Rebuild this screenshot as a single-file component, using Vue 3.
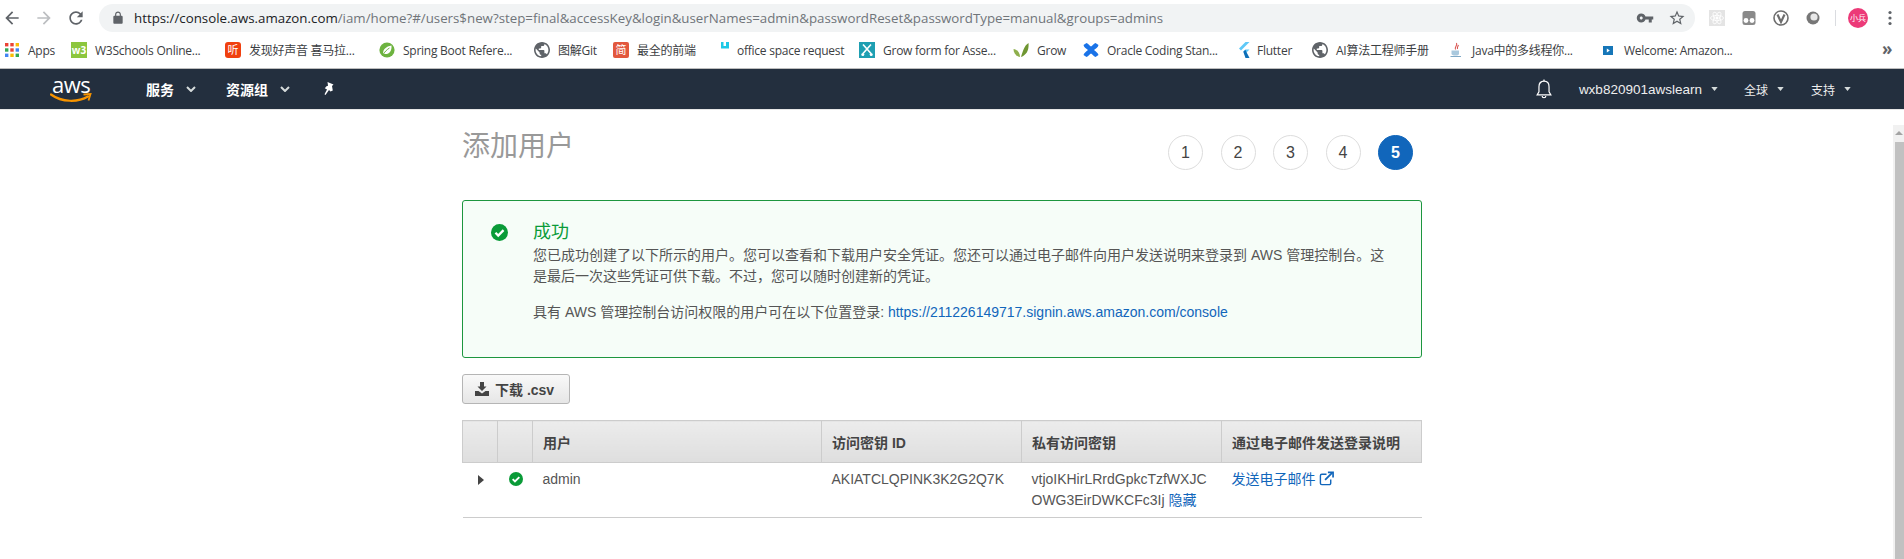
<template>
  <div class="page">
    <div class="toolbar">
      <svg class="tb-icon back" viewBox="0 0 24 24"><path d="M20 11H7.83l5.59-5.59L12 4l-8 8 8 8 1.41-1.41L7.83 13H20v-2z" /></svg>
      <svg class="tb-icon forward" viewBox="0 0 24 24"><path d="M12 4l-1.41 1.41L16.17 11H4v2h12.17l-5.58 5.59L12 20l8-8z" /></svg>
      <svg class="tb-icon reload" viewBox="0 0 24 24"><path d="M17.65 6.35C16.2 4.9 14.21 4 12 4c-4.42 0-7.99 3.58-7.99 8s3.57 8 7.99 8c3.73 0 6.84-2.55 7.73-6h-2.08c-.82 2.33-3.04 4-5.65 4-3.31 0-6-2.69-6-6s2.69-6 6-6c1.66 0 3.14.69 4.22 1.78L13 11h7V4l-2.35 2.35z" /></svg>
      <div class="omnibox">
        <svg class="lock" viewBox="0 0 24 24"><path d="M18 8h-1V6c0-2.76-2.24-5-5-5S7 3.24 7 6v2H6c-1.1 0-2 .9-2 2v10c0 1.1.9 2 2 2h12c1.1 0 2-.9 2-2V10c0-1.1-.9-2-2-2zM9 6c0-1.66 1.34-3 3-3s3 1.34 3 3v2H9V6z" /></svg>
        <span class="url"><span class="url-host">https://console.aws.amazon.com</span>/iam/home?#/users$new?step=final&amp;accessKey&amp;login&amp;userNames=admin&amp;passwordReset&amp;passwordType=manual&amp;groups=admins</span>
        <svg class="omni-icon key" viewBox="0 0 24 24"><path d="M12.65 10C11.83 7.67 9.61 6 7 6c-3.31 0-6 2.69-6 6s2.69 6 6 6c2.61 0 4.83-1.67 5.65-4H17v4h4v-4h2v-4H12.65zM7 14c-1.1 0-2-.9-2-2s.9-2 2-2 2 .9 2 2-.9 2-2 2z" /></svg>
        <svg class="omni-icon star" viewBox="0 0 24 24"><path d="M22 9.24l-7.19-.62L12 2 9.19 8.63 2 9.24l5.46 4.73L5.82 21 12 17.27 18.18 21l-1.63-7.03L22 9.24zM12 15.4l-3.76 2.27 1-4.28-3.32-2.88 4.38-.38L12 6.1l1.71 4.04 4.38.38-3.32 2.88 1 4.28L12 15.4z" /></svg>
      </div>
      <div class="extensions">
        <div class="ext ext-react">
          <svg viewBox="0 0 16 16" fill="none" stroke="#fff" stroke-width="0.8">
            <ellipse cx="8" cy="8" rx="6.5" ry="2.6" />
            <ellipse cx="8" cy="8" rx="6.5" ry="2.6" transform="rotate(60 8 8)" />
            <ellipse cx="8" cy="8" rx="6.5" ry="2.6" transform="rotate(120 8 8)" />
            <circle cx="8" cy="8" r="1.2" fill="#fff" />
          </svg>
        </div>
        <svg class="ext" viewBox="0 0 16 16">
          <rect x="1.5" y="1" width="13" height="14" rx="2.5" fill="#8a8a8a" />
          <circle cx="5" cy="10.5" r="2.4" fill="#fff" />
          <circle cx="11" cy="10.5" r="2.4" fill="#fff" />
        </svg>
        <svg class="ext" viewBox="0 0 16 16">
          <circle cx="8" cy="8" r="7" fill="#fff" stroke="#6e6e6e" stroke-width="1.6" />
          <path d="M4.5 4.5L8 12l3.5-7.5" fill="none" stroke="#6e6e6e" stroke-width="2.2" />
        </svg>
        <svg class="ext" viewBox="0 0 16 16">
          <circle cx="8" cy="8" r="6.5" fill="#777" />
          <circle cx="9" cy="7" r="3.6" fill="#e8e8e8" />
        </svg>
        <div class="ext-divider"></div>
        <div class="avatar">小兵</div>
        <svg class="menu-dots" viewBox="0 0 4 16"><circle cx="2" cy="2.5" r="1.6" /><circle cx="2" cy="8" r="1.6" /><circle cx="2" cy="13.5" r="1.6" /></svg>
      </div>
    </div>

    <div class="bookmarks">
      <div v-for="b in bookmarks" :key="b.label" class="bookmark" :style="{ width: b.width + 'px' }">
        <span class="bm-icon-box" :class="b.boxClass">
          <svg v-if="b.icon === 'apps'" viewBox="0 0 14 14">
            <rect v-for="d in appDots" :key="d.x + '-' + d.y" :x="d.x" :y="d.y" width="3.4" height="3.4" :fill="d.color" />
          </svg>
          <template v-else-if="b.glyph">{{ b.glyph }}</template>
          <svg v-else-if="b.icon === 'spring'" viewBox="0 0 16 16">
            <circle cx="8" cy="8" r="7.6" fill="#6db33f" />
            <path d="M4.2 11.5C3.6 7.5 7 4.5 12.5 3.5c.4 5-2 8.6-6 8.6-.8 0-1.5-.2-2.3-.6z" fill="#fff" />
            <path d="M4.5 12C6 9.5 8 7.5 10.5 6" stroke="#6db33f" fill="none" />
          </svg>
          <svg v-else-if="b.icon === 'globe'" viewBox="2 2 20 20">
            <path fill="#5f6368" d="M12 2C6.48 2 2 6.48 2 12s4.48 10 10 10 10-4.48 10-10S17.52 2 12 2zm-1 17.93c-3.95-.49-7-3.85-7-7.93 0-.62.08-1.21.21-1.79L9 15v1c0 1.1.9 2 2 2v1.93zm6.9-2.54c-.26-.81-1-1.39-1.9-1.39h-1v-3c0-.55-.45-1-1-1H8v-2h2c.55 0 1-.45 1-1V7h2c1.1 0 2-.9 2-2v-.41c2.93 1.19 5 4.06 5 7.41 0 2.08-.8 3.97-2.1 5.39z" />
          </svg>
          <svg v-else-if="b.icon === 'office'" viewBox="0 0 8 8">
            <path d="M0 0h2.500v4H5V0h3v6.500H0z" fill="#1ec8e6" />
          </svg>
          <svg v-else-if="b.icon === 'scissors'" viewBox="0 0 16 16">
            <rect width="16" height="16" fill="#1f9fb2" />
            <path d="M4 2.500l8 9M12 2.500l-8 9" stroke="#fff" stroke-width="1.600" />
            <circle cx="3.800" cy="12.600" r="1.500" fill="#fff" />
            <circle cx="12.200" cy="12.600" r="1.500" fill="#fff" />
          </svg>
          <svg v-else-if="b.icon === 'leaf'" viewBox="0 0 16 16">
            <path d="M8 15C10 9 11 4 15.500 1c.6 6.500-1.500 12-7.500 14z" fill="#6f9632" />
            <path d="M7 15C3.500 14.500.5 11.500.5 7c3 .5 6.500 3 6.500 8z" fill="#8eaf4c" />
          </svg>
          <svg v-else-if="b.icon === 'oracle'" viewBox="0 0 16 16">
            <path d="M.5 3l3-2c2 .5 3 3 4.500 3.500C9.500 4 10.500 1.500 12.500 1l3 2c-.5 2.500-3 3.500-4.500 5 1.500 1.500 4 2.500 4.500 5l-3 2c-2-.5-3-3-4.500-3.500C6.500 12 5.500 14.500 3.500 15l-3-2C1 10.500 3.500 9.500 5 8 3.500 6.500 1 5.500.5 3z" fill="#1a73e8" />
          </svg>
          <svg v-else-if="b.icon === 'flutter'" viewBox="0 0 12 16">
            <path d="M7.500 0h4L3 8.600 1 6.600z" fill="#5fc9f8" />
            <path d="M7.500 7.500h4L7.300 11.700l-2-2z" fill="#5fc9f8" />
            <path d="M5.300 9.700l2-2 4.200 8.300h-4z" fill="#0d6fb8" />
          </svg>
          <svg v-else-if="b.icon === 'java'" viewBox="0 0 16 16">
            <path d="M8.500 1C10 3.500 6 5 7.500 7.500M10.500 3C9.500 5 9 5.500 9.500 7" fill="none" stroke="#d9534f" stroke-width="1.100" />
            <path d="M3.500 8.500h7.500v3c0 1.500-1 2-3.500 2s-4-.5-4-2z" fill="#a9c8dd" />
            <path d="M2.500 14.500h10.500" stroke="#7fa9c6" stroke-width="1" />
          </svg>
          <svg v-else-if="b.icon === 'welcome'" viewBox="0 0 10 9">
            <rect width="10" height="9" fill="#1676b8" />
            <path d="M3.800 2.500l3 2-3 2z" fill="#fff" />
          </svg>
        </span>
        <span class="bm-label">{{ b.label }}</span>
      </div>
      <span class="bm-more">»</span>
    </div>

    <nav class="topnav">
      <div class="aws-logo">
        <span class="aws-word">aws</span>
        <svg class="aws-smile" viewBox="0 0 42 12" fill="none">
          <path d="M1 2.500C12 10.500 28 10.500 38 4.500" stroke="#f79400" stroke-width="2.200" stroke-linecap="round" />
          <path d="M33.500 2.500L40.500 2 38.500 8.500" stroke="#f79400" stroke-width="1.800" />
        </svg>
      </div>
      <div class="nav-item nav-main services">服务<svg class="chev" viewBox="0 0 10 6"><path d="M1 1l4 4 4-4" /></svg></div>
      <div class="nav-item nav-main groups">资源组<svg class="chev" viewBox="0 0 10 6"><path d="M1 1l4 4 4-4" /></svg></div>
      <svg class="pin" viewBox="0 0 14 16"><path d="M5.500 1l6 2.500-1.500 1.500.8 4.500-2.300 1-1.500-1.500L3.500 14l-1-.8L5 8.500 2.800 7.200 4.500 5.200 6 4.800z" fill="#fff" /></svg>
      <div class="nav-spacer"></div>
      <svg class="bell" viewBox="0 0 24 24" fill="none" stroke="#fff" stroke-width="1.300"><path d="M12 3.500c-3.500 0-5.500 2.600-5.500 6v5.500L4.500 18.500h15l-2-3.500V9.500c0-3.400-2-6-5.500-6z" /><path d="M10 19.500a2 2 0 0 0 4 0" /><path d="M12 1.500v2" /></svg>
      <div class="nav-item nav-right account">wxb820901awslearn<svg class="caret" viewBox="0 0 8 5"><path d="M0 0h8L4 5z" /></svg></div>
      <div class="nav-item nav-right region">全球<svg class="caret" viewBox="0 0 8 5"><path d="M0 0h8L4 5z" /></svg></div>
      <div class="nav-item nav-right support">支持<svg class="caret" viewBox="0 0 8 5"><path d="M0 0h8L4 5z" /></svg></div>
    </nav>

    <div class="body-row">
      <main class="content">
        <header class="wizard-head">
          <h1 class="title">添加用户</h1>
          <ol class="steps">
            <li v-for="n in 5" :key="n" class="step" :class="{ active: n === 5 }">{{ n }}</li>
          </ol>
        </header>

        <section class="alert">
          <svg class="check alert-check" viewBox="0 0 16 16">
            <circle cx="8" cy="8" r="8" fill="#0a9b38" />
            <path d="M4.200 8.200l2.600 2.600 5-5" fill="none" stroke="#fff" stroke-width="2.200" />
          </svg>
          <div class="alert-body">
            <div class="alert-title">成功</div>
            <p class="alert-text">您已成功创建了以下所示的用户。您可以查看和下载用户安全凭证。您还可以通过电子邮件向用户发送说明来登录到 AWS 管理控制台。这是最后一次这些凭证可供下载。不过，您可以随时创建新的凭证。</p>
            <p class="alert-text alert-link-line">具有 AWS 管理控制台访问权限的用户可在以下位置登录: <a class="link">https://211226149717.signin.aws.amazon.com/console</a></p>
          </div>
        </section>

        <button class="download-btn">
          <svg viewBox="0 0 14 14"><path d="M5 0h4v4.500h2.500L7 9 2.500 4.500H5z" /><path d="M0 9h3.500L7 11.500 10.500 9H14v5H0z" /></svg>
          下载 .csv
        </button>

        <table class="users">
          <colgroup>
            <col class="c-narrow" /><col class="c-narrow" /><col class="c-user" /><col class="c-key" /><col class="c-key" /><col />
          </colgroup>
          <thead>
            <tr>
              <th></th>
              <th></th>
              <th>用户</th>
              <th>访问密钥 ID</th>
              <th>私有访问密钥</th>
              <th>通过电子邮件发送登录说明</th>
            </tr>
          </thead>
          <tbody>
            <tr>
              <td class="cell-icon"><span class="expander"></span></td>
              <td class="cell-icon">
                <svg class="check row-check" viewBox="0 0 16 16">
                  <circle cx="8" cy="8" r="8" fill="#0a9b38" />
                  <path d="M4.200 8.200l2.600 2.600 5-5" fill="none" stroke="#fff" stroke-width="2.200" />
                </svg>
              </td>
              <td>admin</td>
              <td>AKIATCLQPINK3K2G2Q7K</td>
              <td class="secret">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 <a class="link">隐藏</a></td>
              <td>
                <a class="link">发送电子邮件</a>
                <svg class="external" viewBox="0 0 16 16" fill="none" stroke="#1166bb" stroke-width="1.500">
                  <path d="M8 3.500H3a1.500 1.500 0 0 0-1.500 1.500v8A1.500 1.500 0 0 0 3 14.500h8a1.500 1.500 0 0 0 1.500-1.500V9" />
                  <path d="M6.500 9.500L14 2" stroke-width="2" />
                  <path d="M9.500 1.500h5.500V7" stroke-width="1.800" />
                </svg>
              </td>
            </tr>
          </tbody>
        </table>
      </main>

      <div class="scrollbar">
        <div class="scroll-arrow"></div>
        <div class="scroll-thumb"></div>
      </div>
    </div>
  </div>
</template>

<script setup>
const appDots = [
  { x: 0, y: 0, color: '#ea4335' }, { x: 5.3, y: 0, color: '#ea4335' }, { x: 10.6, y: 0, color: '#fbbc05' },
  { x: 0, y: 5.3, color: '#34a853' }, { x: 5.3, y: 5.3, color: '#ea4335' }, { x: 10.6, y: 5.3, color: '#4285f4' },
  { x: 0, y: 10.6, color: '#4285f4' }, { x: 5.3, y: 10.6, color: '#fbbc05' }, { x: 10.6, y: 10.6, color: '#34a853' },
]

// width = distance to the start of the next bookmark
const bookmarks = [
  { label: 'Apps', width: 66, icon: 'apps', boxClass: 'box-apps' },
  { label: 'W3Schools Online...', width: 154, glyph: 'w3', boxClass: 'box-w3' },
  { label: '发现好声音 喜马拉...', width: 154, glyph: '听', boxClass: 'box-ting' },
  { label: 'Spring Boot Refere...', width: 155, icon: 'spring' },
  { label: '图解Git', width: 79, icon: 'globe' },
  { label: '最全的前端', width: 108, glyph: '简', boxClass: 'box-jian' },
  { label: 'office space request', width: 138, icon: 'office', boxClass: 'box-office' },
  { label: 'Grow form for Asse...', width: 154, icon: 'scissors' },
  { label: 'Grow', width: 70, icon: 'leaf' },
  { label: 'Oracle Coding Stan...', width: 155, icon: 'oracle' },
  { label: 'Flutter', width: 74, icon: 'flutter', boxClass: 'box-flutter' },
  { label: 'AI算法工程师手册', width: 136, icon: 'globe' },
  { label: 'Java中的多线程你...', width: 155, icon: 'java' },
  { label: 'Welcome: Amazon...', width: 200, icon: 'welcome', boxClass: 'box-welcome' },
]
</script>

<style>
html,
body {
  background: #fff;
}
</style>

<style scoped>
.page {
  height: 559px;
  overflow: hidden;
  display: flex;
  flex-direction: column;
  font-family: "Liberation Sans", "Noto Sans CJK SC", sans-serif;
  background: #fff;
}

.toolbar {
  height: 34px;
  box-sizing: border-box;
  padding-top: 4px;
  display: flex;
  align-items: flex-start;
}

.tb-icon {
  width: 20px;
  height: 20px;
  margin-top: 4px;
  fill: #5f6368;
  flex: none;
}

.back { margin-left: 2px; }
.forward { margin-left: 12px; fill: #bcbec1; }
.reload { margin-left: 12px; }

.omnibox {
  width: 1596px;
  height: 28px;
  margin-left: 13px;
  background: #f1f3f4;
  border-radius: 14px;
  display: flex;
  align-items: center;
  flex: none;
  box-sizing: border-box;
  padding-left: 12px;
}

.lock {
  width: 14px;
  height: 14px;
  fill: #5f6368;
  flex: none;
}

.url {
  margin-left: 9px;
  font-family: "Open Sans", "Noto Sans", sans-serif;
  font-size: 13.3px;
  color: #70757a;
  white-space: nowrap;
  width: 1502px;
  flex: none;
  overflow: hidden;
}

.url-host { color: #202124; }

.omni-icon {
  width: 18px;
  height: 18px;
  fill: #5f6368;
  flex: none;
}

.star { margin-left: 14px; }

.extensions {
  display: flex;
  align-items: center;
  height: 28px;
  margin-left: 14px;
}

.ext {
  width: 16px;
  height: 16px;
  margin-right: 16px;
  flex: none;
  display: block;
}

.ext-react { background: #e4e4e4; }

.ext-divider {
  width: 1px;
  height: 16px;
  background: #dadce0;
  margin-left: -2px;
  flex: none;
}

.avatar {
  width: 20px;
  height: 20px;
  border-radius: 50%;
  background: #ec3a78;
  color: #fff;
  font-size: 8px;
  line-height: 20px;
  text-align: center;
  margin-left: 12px;
  flex: none;
  font-family: "Noto Sans CJK SC", sans-serif;
  white-space: nowrap;
}

.menu-dots {
  width: 4px;
  height: 16px;
  fill: #5f6368;
  margin-left: 20px;
  flex: none;
}

.bookmarks {
  height: 34px;
  box-sizing: border-box;
  padding: 0 0 2px 5px;
  display: flex;
  align-items: center;
  position: relative;
  font-family: "Open Sans", "Noto Sans CJK SC", sans-serif;
  font-size: 12px;
  color: #3c4043;
}

.bookmark {
  flex: none;
  display: flex;
  align-items: center;
  white-space: nowrap;
}

.bm-label { letter-spacing: -0.25px; }

.bm-icon-box {
  width: 16px;
  height: 16px;
  margin-right: 8px;
  flex: none;
  display: flex;
  align-items: center;
  justify-content: center;
  color: #fff;
  font-size: 11px;
  line-height: 16px;
}

.bm-icon-box svg {
  width: 100%;
  height: 100%;
  display: block;
}

.box-apps { width: 14px; height: 14px; margin-right: 9px; }
.box-w3 { background: #8cc63e; font-size: 10px; font-weight: 700; }
.box-ting { background: #f0400f; border-radius: 3px; }
.box-jian { background: #e2583e; border-radius: 2px; }
.box-office { width: 8px; height: 8px; margin: -8px 8px 0 0; }
.box-flutter { width: 12px; margin-right: 7px; }
.box-welcome { width: 10px; height: 9px; margin-right: 11px; }

.bm-more {
  position: absolute;
  left: 1882px;
  top: 6px;
  font-size: 17px;
  line-height: 18px;
  color: #5f6368;
  font-weight: 700;
}

.topnav {
  height: 41px;
  box-sizing: border-box;
  background: #232f3e;
  border-top: 1px solid #bdbdbd;
  display: flex;
  align-items: center;
  color: #fff;
  flex: none;
}

.aws-logo {
  width: 42px;
  height: 32px;
  margin-left: 50px;
  position: relative;
  flex: none;
}

.aws-word {
  position: absolute;
  left: 2px;
  top: -1px;
  font-family: "Open Sans", sans-serif;
  font-size: 22px;
  line-height: 24px;
  letter-spacing: -0.5px;
}

.aws-smile {
  position: absolute;
  left: 0;
  top: 19px;
  width: 42px;
  height: 12px;
}

.nav-item {
  display: flex;
  align-items: center;
  white-space: nowrap;
}

.nav-main {
  font-size: 14px;
  font-weight: 700;
}

.services { margin-left: 54px; }
.groups { margin-left: 30px; }

.chev {
  width: 10px;
  height: 6px;
  margin-left: 12px;
  fill: none;
  stroke: #d5dbdb;
  stroke-width: 2;
}

.pin {
  width: 14px;
  height: 16px;
  margin-left: 32px;
  flex: none;
}

.nav-spacer { flex: 1; }

.bell {
  width: 22px;
  height: 22px;
  margin-right: 24px;
  flex: none;
}

.nav-right {
  font-size: 12px;
  font-family: "Liberation Sans", "Noto Sans CJK SC", sans-serif;
  color: #eee;
}

.account {
  font-size: 13.5px;
  margin-right: 26px;
}

.region { margin-right: 27px; }
.support { margin-right: 53px; }

.caret {
  width: 7px;
  height: 4px;
  margin-left: 9px;
  fill: #d5dbdb;
}

.body-row {
  flex: 1;
  min-height: 0;
  display: flex;
  border-top: 1px solid #e6e6e6;
  box-sizing: border-box;
}

.content {
  width: 960px;
  margin-left: 462px;
  flex: none;
}

.wizard-head {
  display: flex;
  justify-content: space-between;
  align-items: flex-start;
  padding-top: 20px;
  height: 90px;
  box-sizing: border-box;
}

.title {
  margin: 1px 0 0;
  font-size: 28px;
  line-height: 32px;
  font-weight: 400;
  color: #999;
}

.steps {
  list-style: none;
  margin: 5px 9px 0 0;
  padding: 0;
  display: flex;
  gap: 17.5px;
}

.step {
  width: 35px;
  height: 35px;
  box-sizing: border-box;
  border: 1px solid #ddd;
  border-radius: 50%;
  text-align: center;
  line-height: 33px;
  font-size: 16px;
  color: #444;
}

.step.active {
  background: #1166bb;
  border-color: #1166bb;
  color: #fff;
  font-weight: 700;
}

.alert {
  height: 158px;
  box-sizing: border-box;
  border: 1px solid #1d963f;
  border-radius: 3px;
  background: #f6fdf8;
  display: flex;
  align-items: flex-start;
  padding: 19px 32px 0 28px;
}

.alert-check {
  width: 17px;
  height: 17px;
  margin-top: 4px;
  flex: none;
}

.alert-body {
  margin-left: 25px;
}

.alert-title {
  font-size: 18px;
  line-height: 25px;
  color: #0a9b38;
}

.alert-text {
  margin: 0;
  font-size: 14px;
  line-height: 21px;
  color: #555;
}

.alert-link-line { margin-top: 15px; }

.link {
  color: #1166bb;
  text-decoration: none;
}

.download-btn {
  display: flex;
  align-items: center;
  width: 108px;
  height: 30px;
  margin-top: 16px;
  padding: 0 0 0 12px;
  box-sizing: border-box;
  border: 1px solid #b5b5b5;
  border-radius: 3px;
  background: linear-gradient(#f9f9f9, #e6e6e6);
  color: #444;
  font-family: inherit;
  font-size: 14px;
  font-weight: 700;
  white-space: nowrap;
}

.download-btn svg {
  width: 14px;
  height: 14px;
  fill: #444;
  margin-right: 6px;
  flex: none;
}

.users {
  width: 960px;
  margin-top: 16px;
  table-layout: fixed;
  border-collapse: collapse;
  font-size: 14px;
  color: #555;
}

.c-narrow { width: 35px; }
.c-user { width: 289px; }
.c-key { width: 200px; }

.users th {
  height: 41px;
  padding: 0 10px;
  border: 1px solid #ccc;
  background: linear-gradient(#ececec, #dedede);
  text-align: left;
  font-size: 14px;
  font-weight: 700;
  color: #444;
  white-space: nowrap;
}

.users td {
  padding: 6px 10px 6px;
  line-height: 21px;
  vertical-align: top;
  border-bottom: 1px solid #ccc;
}

.users td.cell-icon {
  padding: 6px 0;
  text-align: center;
}

.expander {
  display: inline-block;
  width: 0;
  height: 0;
  border-left: 6px solid #444;
  border-top: 5px solid transparent;
  border-bottom: 5px solid transparent;
  vertical-align: -1px;
  margin-left: 1px;
}

.row-check {
  width: 14px;
  height: 14px;
  vertical-align: -2px;
  margin-left: 2px;
}

.secret { word-break: break-all; }

.external {
  width: 15px;
  height: 15px;
  vertical-align: -2px;
  margin-left: 3px;
}

.scrollbar {
  width: 11px;
  margin-left: auto;
  margin-top: 15px;
  background: #f1f1f1;
  display: flex;
  flex-direction: column;
  align-items: flex-end;
}

.scroll-arrow {
  margin: 6px 1px 0 0;
  width: 0;
  height: 0;
  border-left: 4px solid transparent;
  border-right: 4px solid transparent;
  border-bottom: 4px solid #a3a3a3;
}

.scroll-thumb {
  margin-top: 7px;
  width: 9px;
  flex: 1;
  background: #c1c1c1;
}
</style>
